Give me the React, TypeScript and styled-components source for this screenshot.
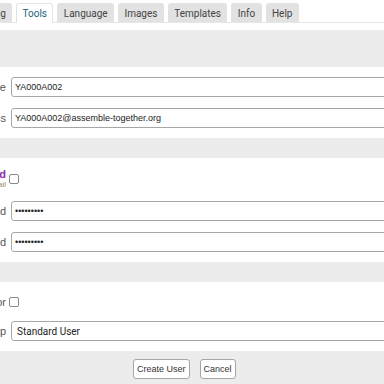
import styled, { createGlobalStyle } from 'styled-components'

const Global = createGlobalStyle`
  html, body {
    margin: 0;
    padding: 0;
    background: #fff;
    overflow: hidden;
  }
  body {
    font-family: Roboto, "Liberation Sans", Arial, sans-serif;
    color: #333;
  }
`

const Page = styled.div`
  width: 384px;
  height: 384px;
  overflow: hidden;
  display: flex;
  flex-direction: column;
`

const TabBar = styled.div`
  display: flex;
  align-items: flex-end;
  gap: 4px;
  height: 23px;
  padding-top: 3px;
  box-sizing: border-box;
  margin-left: -32px;
  border-bottom: 1px solid #e6e6e6;
  flex-shrink: 0;
`

const Tab = styled.div<{ $active?: boolean }>`
  height: ${(p) => (p.$active ? '20px' : '19px')};
  box-sizing: border-box;
  padding: 0 5.4px;
  display: flex;
  align-items: center;
  font-size: 10px;
  border-radius: 3px 3px 0 0;
  background: ${(p) => (p.$active ? '#fff' : '#e2e2e2')};
  border: 1px solid ${(p) => (p.$active ? '#e3e3e3' : '#e2e2e2')};
  border-bottom: none;
  margin-bottom: ${(p) => (p.$active ? '-1px' : '0')};
  color: ${(p) => (p.$active ? '#23607c' : '#444')};
  white-space: nowrap;
`

const Gap = styled.div<{ $h: number }>`
  height: ${(p) => p.$h}px;
  background: #ececec;
  flex-shrink: 0;
`

const Spacer = styled.div`
  height: 7px;
  flex-shrink: 0;
`

const Section = styled.div<{ $top: number; $bottom: number; $gap: number }>`
  display: grid;
  grid-template-columns: 120px 420px;
  column-gap: 4px;
  row-gap: ${(p) => p.$gap}px;
  align-items: center;
  padding: ${(p) => p.$top}px 0 ${(p) => p.$bottom}px;
  margin-left: -113px;
  flex-shrink: 0;
`

const Label = styled.label<{ $accent?: boolean }>`
  text-align: right;
  padding-right: 1px;
  font-family: "Liberation Sans", Arial, sans-serif;
  font-size: 11px;
  color: ${(p) => (p.$accent ? '#8a2fa8' : '#555')};
  font-weight: ${(p) => (p.$accent ? 'bold' : 'normal')};
  line-height: 12px;
  display: flex;
  flex-direction: column;
  align-items: flex-end;
`

const SubLabel = styled.span`
  font-size: 8px;
  font-weight: normal;
  color: #a08a6a;
  line-height: 10px;
`

const Input = styled.input`
  height: 20px;
  box-sizing: border-box;
  border: 1px solid #a6a6a6;
  border-radius: 3px;
  padding: 0 3px;
  font-family: "Liberation Sans", Arial, sans-serif;
  font-size: 9px;
  color: #222;
  background: #fff;
  outline: none;
`

const Select = styled.div`
  height: 20px;
  box-sizing: border-box;
  border: 1px solid #a6a6a6;
  border-radius: 3px;
  padding: 0 5px;
  display: flex;
  align-items: center;
  font-size: 10px;
  color: #222;
`

const Check = styled.span`
  width: 10px;
  height: 10px;
  margin-left: -2px;
  border: 1px solid #8a8a8a;
  border-radius: 2px;
  box-sizing: border-box;
  background: #fff;
`

const Footer = styled.div`
  flex: 1;
  background: #ececec;
  display: flex;
  gap: 10px;
  padding: 8px 0 0 133px;
`

const Button = styled.button`
  height: 20px;
  padding: 0 3px;
  border: 1px solid #a6a6a6;
  border-radius: 3px;
  background: #fff;
  font-family: "Liberation Sans", Arial, sans-serif;
  font-size: 9px;
  color: #333;
`

const tabs = ['Setting', 'Tools', 'Language', 'Images', 'Templates', 'Info', 'Help']

export default function App() {
  return (
    <Page>
      <Global />
      <TabBar>
        {tabs.map((t) => (
          <Tab key={t} $active={t === 'Tools'}>
            {t}
          </Tab>
        ))}
      </TabBar>
      <Spacer />
      <Gap $h={37} />
      <Section $top={10} $bottom={10} $gap={11}>
        <Label>Username</Label>
        <Input defaultValue='YA000A002' />
        <Label>Email Address</Label>
        <Input defaultValue='YA000A002@assemble-together.org' />
      </Section>
      <Gap $h={20} />
      <Section $top={10} $bottom={10} $gap={11}>
        <Label $accent>
          Send Password
          <SubLabel>via email</SubLabel>
        </Label>
        <Check />
        <Label>Password</Label>
        <Input type='password' defaultValue='secret123' />
        <Label>Confirm Password</Label>
        <Input type='password' defaultValue='secret123' />
      </Section>
      <Gap $h={20} />
      <Section $top={14} $bottom={10} $gap={13}>
        <Label>Administrator</Label>
        <Check />
        <Label>Group</Label>
        <Select>Standard User</Select>
      </Section>
      <Footer>
        <Button>Create User</Button>
        <Button>Cancel</Button>
      </Footer>
    </Page>
  )
}
